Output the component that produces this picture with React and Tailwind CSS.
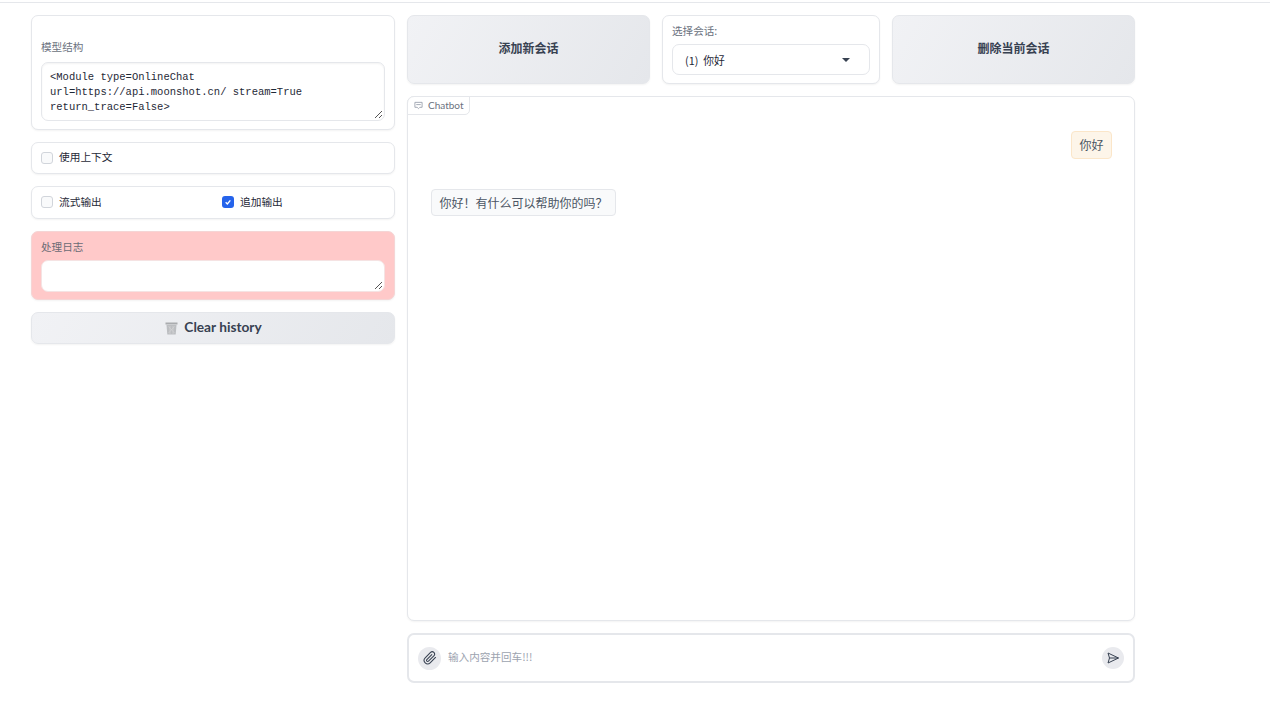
import React from "react";

function Check({ checked }) {
  return checked ? (
    <span className="w-[12px] h-[12px] rounded-[3px] bg-[#2563eb] flex items-center justify-center shrink-0">
      <svg width="8" height="8" viewBox="0 0 12 12" fill="none"><path d="M2.5 6.5 L5 9 L9.5 3.5" stroke="white" strokeWidth="2" /></svg>
    </span>
  ) : (
    <span className="w-[12px] h-[12px] rounded-[3px] border border-[#d1d5db] bg-[#f9fafb] shrink-0" />
  );
}
function Resize() {
  return (
    <svg className="absolute right-[1px] bottom-[1px]" width="9" height="9" viewBox="0 0 9 9" fill="none">
      <path d="M1 8 L8 1 M5 8 L8 5" stroke="#555" strokeWidth="1" />
    </svg>
  );
}
const grad = "bg-[linear-gradient(120deg,#f1f2f5,#e5e7eb)] border border-[#e5e7eb] rounded-[7px] shadow-[0_1px_2px_rgba(0,0,0,0.05)]";
const card = "bg-white border border-[#e5e7eb] rounded-[7px] shadow-[0_1px_2px_rgba(0,0,0,0.05)]";

export default function App() {
  return (
    <div className="w-[1270px] h-[707px] bg-white overflow-hidden pt-[2px] font-['Lato','Noto_Sans_CJK_SC',sans-serif]">
      <div className="h-[1px] bg-[#e5e7eb]" />
      <div className="flex gap-[12px] pl-[31px] pt-[12px]">
        <div className="w-[364px] flex flex-col gap-[12px]">
          <div className={`${card} h-[115px] px-[9px] pt-[24px]`}>
            <div className="text-[10.6px] leading-[14px] text-[#6b7280] h-[22px] font-['Noto_Sans_CJK_SC',sans-serif]">模型结构</div>
            <div className="relative h-[59px] border border-[#e5e7eb] rounded-[7px] px-[8px] pt-[7px] shadow-[inset_0_1px_2px_rgba(0,0,0,0.05)] text-[#1f2937] text-[10.5px] leading-[15px] font-['Liberation_Mono',monospace]">
              <div>&lt;Module type=OnlineChat</div>
              <div>url=https://api.moonshot.cn/ stream=True</div>
              <div>return_trace=False&gt;</div>
              <Resize />
            </div>
          </div>
          <div className={`${card} h-[32px] px-[9px] flex items-center gap-[6px]`}>
            <Check />
            <span className="text-[10.7px] pb-[2px] text-[#1f2937] font-['Noto_Sans_CJK_SC',sans-serif]">使用上下文</span>
          </div>
          <div className={`${card} h-[33px] px-[9px] grid grid-cols-2 items-center`}>
            <div className="flex items-center gap-[6px]">
              <Check />
              <span className="text-[10.7px] text-[#1f2937] font-['Noto_Sans_CJK_SC',sans-serif]">流式输出</span>
            </div>
            <div className="flex items-center gap-[6px] pl-[9px]">
              <Check checked />
              <span className="text-[10.7px] text-[#1f2937] font-['Noto_Sans_CJK_SC',sans-serif]">追加输出</span>
            </div>
          </div>
          <div className="h-[69px] bg-[#ffc9c9] rounded-[7px] border border-[#f5d5d5] px-[9px] pt-[8px] shadow-[0_1px_2px_rgba(0,0,0,0.05)]">
            <div className="text-[10.6px] leading-[14px] text-[#6b6b75] h-[20px] font-['Noto_Sans_CJK_SC',sans-serif]">处理日志</div>
            <div className="relative h-[32px] bg-white rounded-[7px] border border-[#f5e3e3]">
              <Resize />
            </div>
          </div>
          <div className={`${grad} h-[32px] pl-[1px] flex items-center justify-center gap-[6px] text-[13.7px] font-bold text-[#374151]`}>
            <svg width="13" height="13" viewBox="0 0 13 13">
              <rect x="0.5" y="0.5" width="12" height="2" fill="#a9abae" />
              <path d="M1.5 3 H11.5 L10.7 12.5 H2.3 Z" fill="#bcbec1" />
              <path d="M3.5 4.5 L9.5 11 M9.5 4.5 L3.5 11 M5 4 L5 12 M8 4 L8 12" stroke="#d6d7d9" strokeWidth="0.6" />
            </svg>
            <span className="leading-[16px] pb-[2px]">Clear history</span>
          </div>
        </div>

        <div className="w-[728px] flex flex-col gap-[12px]">
          <div className="flex gap-[12px] h-[69px]">
            <div className={`${grad} w-[243px] pb-[4px] flex items-center justify-center text-[12px] font-bold text-[#374151] font-['Noto_Sans_CJK_SC',sans-serif]`}>添加新会话</div>
            <div className={`${card} w-[218px] px-[9px] pt-[8px] font-['Noto_Sans_CJK_SC',sans-serif]`}>
              <div className="text-[10.6px] leading-[14px] text-[#6b7280] h-[20px]">选择会话:</div>
              <div className="h-[31px] border border-[#e5e7eb] rounded-[7px] flex items-center justify-between pl-[12px] pr-[19px] pt-[1px] text-[10.8px] text-[#1f2937]">
                <span className="whitespace-pre">(1)  你好</span>
                <span className="w-0 h-0 border-x-[4px] border-x-transparent border-t-[4px] border-t-[#374151]" />
              </div>
            </div>
            <div className={`${grad} w-[243px] pb-[4px] flex items-center justify-center text-[12px] font-bold text-[#374151] font-['Noto_Sans_CJK_SC',sans-serif]`}>删除当前会话</div>
          </div>

          <div className={`${card} relative h-[525px] pl-[23px] pr-[22px] pt-[34px] flex flex-col`}>
            <div className="absolute left-[-1px] top-[-1px] h-[19px] pl-[6px] pr-[5px] flex items-center gap-[5px] bg-white border border-[#e5e7eb] rounded-tl-[7px] rounded-br-[5px] text-[10px] text-[#6b7280]">
              <svg width="9" height="9" viewBox="0 0 10 10" fill="none">
                <path d="M1 1.5 H9 V7 H6.5 L5 8.5 L3.5 7 H1 Z" stroke="#9ca3af" strokeWidth="1" />
                <path d="M2.5 4 H7.5" stroke="#9ca3af" strokeWidth="1" />
              </svg>
              <span>Chatbot</span>
            </div>
            <div className="self-end h-[28px] px-[7.5px] flex items-center bg-[#fdf5e9] border border-[#fbe6c9] rounded-[4px] text-[12px] text-[#4b5563] font-['Noto_Sans_CJK_SC',sans-serif]">你好</div>
            <div className="self-start mt-[30px] h-[27px] px-[7.5px] flex items-center bg-[#f9fafb] border border-[#e5e7eb] rounded-[4px] text-[12px] text-[#4b5563] font-['Noto_Sans_CJK_SC',sans-serif]">{"你好\uFF01有什么可以帮助你的吗\uFF1F"}</div>
          </div>

          <div className="h-[50px] bg-white border-2 border-[#e5e7eb] rounded-[7px] flex items-center pl-[9px] pr-[9px]">
            <span className="w-[23px] h-[23px] rounded-full bg-[#e9eaee] flex items-center justify-center shrink-0">
              <svg width="14" height="14" viewBox="0 0 24 24" fill="none" stroke="#374151" strokeWidth="1.8" strokeLinecap="round" strokeLinejoin="round">
                <path d="M21.44 11.05l-9.19 9.19a6 6 0 0 1-8.49-8.49l9.19-9.19a4 4 0 0 1 5.66 5.66l-9.2 9.19a2 2 0 0 1-2.83-2.83l8.49-8.48" />
              </svg>
            </span>
            <span className="ml-[7px] pb-[2px] flex-1 text-[10.6px] text-[#9ca3af] font-['Noto_Sans_CJK_SC',sans-serif]">输入内容并回车!!!</span>
            <span className="w-[22px] h-[22px] rounded-full bg-[#e9eaee] flex items-center justify-center shrink-0">
              <svg width="14" height="14" viewBox="0 0 14 14" fill="none" stroke="#374151" strokeWidth="1" strokeLinejoin="round">
                <path d="M2 2 L12.5 7 L2 12 L3.5 7 Z" />
                <path d="M3.5 7 H12.5" />
              </svg>
            </span>
          </div>
        </div>
      </div>
    </div>
  );
}
